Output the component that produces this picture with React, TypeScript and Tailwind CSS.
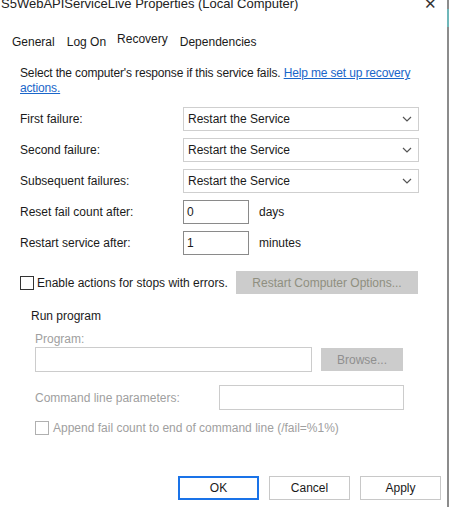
import React from "react";

const Chevron = () => (
  <svg width="10" height="6" viewBox="0 0 10 6" className="mr-[6px]">
    <path d="M1 1 L5 5 L9 1" fill="none" stroke="#555" strokeWidth="1.2" />
  </svg>
);

const SelectBox = ({ label }: { label: string }) => (
  <div className="flex items-center h-[24px]">
    <div className="w-[163px] text-[12px] text-[#1a1a1a]">{label}</div>
    <div className="w-[236px] h-[24px] border border-[#cfcfcf] bg-white flex items-center justify-between">
      <span className="pl-[4px] text-[12px] text-[#1a1a1a]">Restart the Service</span>
      <Chevron />
    </div>
  </div>
);

const NumInput = ({ label, value, unit }: { label: string; value: string; unit: string }) => (
  <div className="flex items-center h-[24px]">
    <div className="w-[163px] text-[12px] text-[#1a1a1a]">{label}</div>
    <div className="w-[66px] h-[24px] border border-[#8a8a8a] bg-white flex items-center pl-[3px] text-[12px] text-[#1a1a1a]">
      {value}
    </div>
    <span className="ml-[10px] text-[12px] text-[#1a1a1a]">{unit}</span>
  </div>
);

export default function App() {
  return (
    <div
      className="relative w-[453px] h-[507px] bg-white overflow-hidden text-[#1a1a1a]"
      style={{ fontFamily: '"Liberation Sans", Arial, sans-serif' }}
    >
      {/* right frame line */}
      <div className="absolute left-[447px] top-0 w-[2px] h-[507px] bg-[#8c8c8c]" />
      <div className="absolute left-[447px] top-[9px] w-[2px] h-[18px] bg-[#6fb7b9]" />

      {/* title bar */}
      <div className="flex items-center justify-between h-[16px] mt-[-4px] pl-[1px] pr-[16px]">
        <span className="text-[13px] leading-[16px] text-[#222]">S5WebAPIServiceLive Properties (Local Computer)</span>
        <span className="text-[15px] leading-[16px] text-[#333]">✕</span>
      </div>

      {/* tabs */}
      <div className="flex items-end h-[16px] mt-[22px] pl-[12px] text-[12px] leading-[16px]">
        <span>General</span>
        <span className="ml-[12px]">Log On</span>
        <span className="ml-[11px] mb-[3px]">Recovery</span>
        <span className="ml-[12px]">Dependencies</span>
      </div>

      <div className="pl-[20px]">
        <div className="mt-[16px] text-[12px] leading-[15px] w-[408px] tracking-[-0.15px]">
          Select the computer's response if this service fails.{" "}
          <span className="text-[#1a66c9] underline">Help me set up recovery actions.</span>
        </div>

        <div className="mt-[11px] flex flex-col gap-[7px]">
          <SelectBox label="First failure:" />
          <SelectBox label="Second failure:" />
          <SelectBox label="Subsequent failures:" />
        </div>

        <div className="mt-[7px] flex flex-col gap-[7px]">
          <NumInput label="Reset fail count after:" value="0" unit="days" />
          <NumInput label="Restart service after:" value="1" unit="minutes" />
        </div>

        <div className="mt-[16px] flex items-center h-[23px]">
          <div className="w-[14px] h-[14px] border border-[#333] bg-white" />
          <span className="ml-[3px] text-[12px]">Enable actions for stops with errors.</span>
          <div className="ml-auto mr-[35px] w-[182px] h-[23px] bg-[#cccccc] flex items-center justify-center text-[12px] text-[#8f8f80]">
            Restart Computer Options...
          </div>
        </div>

        <div className="pl-[11px] mt-[14px] text-[12px] leading-[16px]">Run program</div>

        <div className="pl-[15px]">
          <div className="mt-[7px] text-[12px] leading-[16px] text-[#a0a0a0]">Program:</div>
          <div className="mt-[0px] flex items-center">
            <div className="w-[277px] h-[25px] border border-[#cccccc] bg-white" />
            <div className="ml-[9px] w-[82px] h-[23px] bg-[#cccccc] flex items-center justify-center text-[12px] text-[#8f8f8f]">
              Browse...
            </div>
          </div>
          <div className="mt-[13px] flex items-center">
            <div className="w-[184px] text-[12px] text-[#a0a0a0]">Command line parameters:</div>
            <div className="w-[185px] h-[25px] border border-[#cccccc] bg-white" />
          </div>
          <div className="mt-[11px] flex items-center h-[14px]">
            <div className="w-[14px] h-[14px] border border-[#b0b0b0] bg-white" />
            <span className="ml-[4px] text-[12px] text-[#a0a0a0]">Append fail count to end of command line (/fail=%1%)</span>
          </div>
        </div>
      </div>

      <div className="mt-[41px] flex pl-[178px] gap-[10px]">
        <div className="w-[81px] h-[24px] border-2 border-[#1a73e8] bg-white flex items-center justify-center text-[12px]">OK</div>
        <div className="w-[81px] h-[24px] border border-[#c8c8c8] bg-white flex items-center justify-center text-[12px]">Cancel</div>
        <div className="w-[81px] h-[24px] border border-[#c8c8c8] bg-white flex items-center justify-center text-[12px]">Apply</div>
      </div>
    </div>
  );
}
